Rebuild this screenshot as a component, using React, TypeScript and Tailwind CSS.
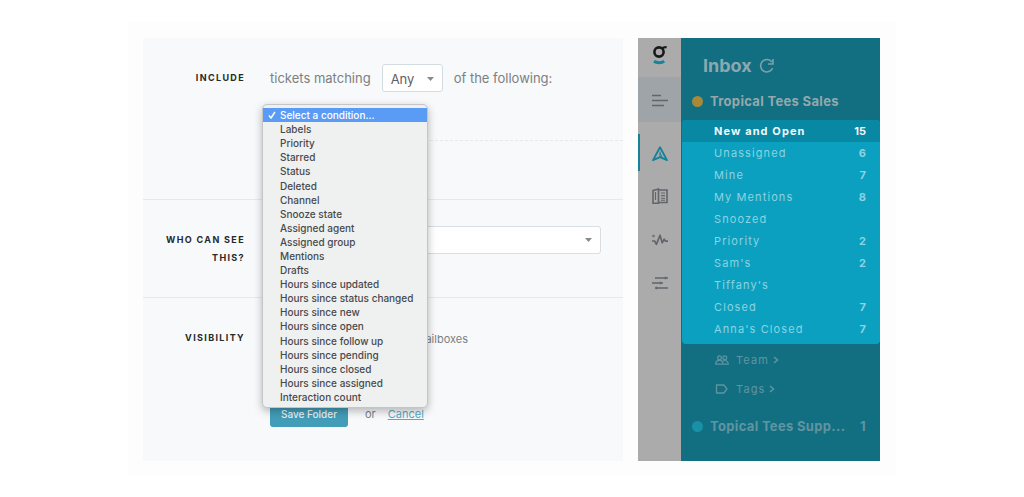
import { useState } from 'react';

const conditions = [
  'Select a condition...',
  'Labels',
  'Priority',
  'Starred',
  'Status',
  'Deleted',
  'Channel',
  'Snooze state',
  'Assigned agent',
  'Assigned group',
  'Mentions',
  'Drafts',
  'Hours since updated',
  'Hours since status changed',
  'Hours since new',
  'Hours since open',
  'Hours since follow up',
  'Hours since pending',
  'Hours since closed',
  'Hours since assigned',
  'Interaction count',
];

const folders = [
  { name: 'New and Open', count: 15 },
  { name: 'Unassigned', count: 6 },
  { name: 'Mine', count: 7 },
  { name: 'My Mentions', count: 8 },
  { name: 'Snoozed' },
  { name: 'Priority', count: 2 },
  { name: "Sam's", count: 2 },
  { name: "Tiffany's" },
  { name: 'Closed', count: 7 },
  { name: "Anna's Closed", count: 7 },
];

function Caret() {
  return (
    <svg width="7" height="5" viewBox="0 0 7 5" className="pointer-events-none absolute right-[9px] top-1/2 -translate-y-1/2 fill-[#858b8d]">
      <path d="M0 0.5h7L3.5 4.5z" />
    </svg>
  );
}

function ConditionMenu() {
  const [selected, setSelected] = useState(conditions[0]);

  return (
    <ul
      role="listbox"
      aria-label="Condition"
      className="absolute -left-2 top-[66px] z-10 flex min-h-[304px] w-[166px] flex-col rounded-[5px] border border-[#c3c6c8] bg-[#eff1f1] pb-[3px] pt-[3px] shadow-[0_3px_8px_rgba(0,0,0,0.28)]"
    >
      {conditions.map((condition) => {
        const active = condition === selected;
        return (
          <li key={condition} role="option" aria-selected={active} className="flex flex-1">
            <button
              type="button"
              onClick={() => setSelected(condition)}
              className={`flex w-full items-center text-left text-[10px] font-medium leading-[14px] ${
                active ? 'bg-[#5a9bf6] text-white' : 'text-[#48494b]'
              }`}
            >
              <span className="flex w-[17px] shrink-0 justify-center">
                {active && (
                  <svg width="8" height="8" viewBox="0 0 8 8" fill="none" stroke="currentColor" strokeWidth="1.5">
                    <path d="M1 4.6l2 2.4L7 1" />
                  </svg>
                )}
              </span>
              {condition}
            </button>
          </li>
        );
      })}
    </ul>
  );
}

function FolderForm() {
  const label = 'w-[102px] shrink-0 text-right text-[9px] font-bold uppercase leading-[18px] tracking-[0.15em] text-[#26292b]';

  return (
    <form className="min-w-0 flex-1 bg-[#f8f9fb] text-[13px] text-[#7b8082]" onSubmit={(e) => e.preventDefault()}>
      <div className="flex min-h-[162px] gap-[25px] border-b border-[#e6e9eb]">
        <label htmlFor="match" className={`${label} pt-[31px]`}>Include</label>
        <div className="relative flex-1">
          <div className="flex min-h-[103px] items-start gap-[11px] border-b border-dashed border-[#e6e9eb] pt-[26px] leading-7">
            <span>tickets matching</span>
            <span className="relative">
              <select id="match" className="h-7 w-[61px] appearance-none rounded-[3px] border border-[#d3dde1] bg-white pl-2 text-[13px] text-[#5c6163]">
                <option>Any</option>
                <option>All</option>
              </select>
              <Caret />
            </span>
            <span>of the following:</span>
          </div>
          <ConditionMenu />
        </div>
      </div>

      <div className="flex min-h-[98px] gap-[25px] border-b border-[#e6e9eb] pr-[22px]">
        <label htmlFor="audience" className={`${label} pl-4 pt-[31px]`}>Who can see this?</label>
        <div className="flex-1 pt-[26px]">
          <div className="relative">
            <select id="audience" className="block h-7 w-full appearance-none rounded-[3px] border border-[#d8dee1] bg-white px-2">
              <option></option>
            </select>
            <Caret />
          </div>
        </div>
      </div>

      <div className="flex gap-[25px] pt-[31px]">
        <span className={label}>Visibility</span>
        <div className="flex-1">
          <label className="flex w-[198px] items-center justify-between text-[11px] leading-5">
            <input type="checkbox" className="size-3" />
            all mailboxes
          </label>
          <div className="flex items-start pt-[52px] text-[11px] leading-[26px]">
            <button type="submit" className="h-[26px] w-[78px] rounded-[3px] bg-[#429db8] text-[10px] font-medium text-[#e3f1f5]">
              Save Folder
            </button>
            <span className="ml-[17px]">or</span>
            <a href="#" className="ml-3 text-[#55a9c4] underline">Cancel</a>
          </div>
        </div>
      </div>
    </form>
  );
}

function Rail() {
  return (
    <nav aria-label="Main" className="flex w-[43px] shrink-0 flex-col bg-[#ababab] text-[#62666b]">
      <a href="#" aria-label="Home" className="flex h-[39px] items-start justify-center pt-[7px]">
        <svg width="16" height="20" viewBox="0 0 16 20" fill="none">
          <circle cx="7" cy="7" r="4.6" stroke="#17191b" strokeWidth="2.6" />
          <path d="M10 3.8C11 2.2 12.3 2 14.6 2.1" stroke="#17191b" strokeWidth="2.2" />
          <path d="M2 16.2c2.6 1.9 7.4 1.9 10.2 0" stroke="#16849a" strokeWidth="3" />
        </svg>
      </a>
      <a href="#" aria-label="Menu" className="flex h-[45px] items-center justify-center bg-[#9fa4a8] pt-0.5">
        <svg width="16" height="13" viewBox="0 0 16 13" fill="none" stroke="currentColor" strokeWidth="1.5">
          <path d="M0 1.5h9M0 6.5h16M0 11.5h12" />
        </svg>
      </a>
      <a href="#" aria-label="Inbox" className="mb-1 mt-3 flex h-[37px] items-center justify-center border-l-2 border-[#168298] pr-0.5 pt-0.5 text-[#168298]">
        <svg width="16" height="16" viewBox="0 0 16 16" fill="none" stroke="currentColor" strokeWidth="1.8" strokeLinejoin="round">
          <path d="M8 1.2L15 14.2 8 11.2 1 14.2z" />
          <path d="M8 5.5v6M8 7l2.6 5" strokeWidth="1" />
        </svg>
      </a>
      <a href="#" aria-label="Knowledge base" className="flex h-[43px] items-center justify-center">
        <svg width="16" height="17" viewBox="0 0 16 17" fill="none" stroke="currentColor" strokeWidth="1.6">
          <path d="M1 2.5L6.5 1v14.2L1 15.2zM6.5 2H15v12.5H6.5" />
          <path d="M3.5 4v8M9 5h4M9 7.6h4M9 10.2h4M9 12.3h4" strokeWidth="1.1" />
        </svg>
      </a>
      <a href="#" aria-label="Reports" className="flex h-[43px] items-center justify-center">
        <svg width="16" height="12" viewBox="0 0 16 12" fill="none" stroke="currentColor" strokeWidth="1.7" strokeLinejoin="round">
          <path d="M0 7h2.6l1.8 3.4L8 1.2l2.2 7.6 2-3.6 1.2 2H16" />
          <circle cx="1.5" cy="2" r="0.4" />
        </svg>
      </a>
      <a href="#" aria-label="Settings" className="flex h-[43px] items-center justify-center">
        <svg width="16" height="14" viewBox="0 0 16 14" fill="none" stroke="currentColor" strokeWidth="1.5">
          <path d="M3 2h13M0 7h11M3 12h13" />
          <path d="M13.5 0.8v2.4M8.5 5.8v2.4M4.5 10.8v2.4" />
        </svg>
      </a>
    </nav>
  );
}

function Chevron() {
  return (
    <svg width="6" height="8" viewBox="0 0 6 8" fill="none" stroke="currentColor" strokeWidth="1.5">
      <path d="M1 1l3.5 3L1 7" />
    </svg>
  );
}

function Sidebar() {
  return (
    <aside className="flex min-w-0 flex-1 flex-col bg-[#126f81] text-[#7fa0a8]">
      <div className="flex items-center gap-[7px] pl-[22px] pt-[17px]">
        <h1 className="text-lg font-bold leading-[22px] text-[#8ba9b0]">Inbox</h1>
        <button type="button" aria-label="Refresh">
          <svg width="16" height="16" viewBox="0 0 16 16" fill="none" stroke="currentColor" strokeWidth="1.6">
            <path d="M13.6 10A6.2 6.2 0 1 1 12.8 4" />
            <path d="M14 1v5H9" />
          </svg>
        </button>
      </div>
      <a href="#" className="mt-3.5 flex items-center gap-[7px] pl-[11px] text-[13px] font-bold leading-5 tracking-wide text-[#94a8ac]">
        <span className="size-[11px] rounded-full bg-[#a98935]" />
        Tropical Tees Sales
      </a>

      <ul className="ml-px mt-[9px] overflow-hidden rounded bg-[#0ba0bf] pb-1 text-[11px] leading-[22px] tracking-widest text-[#8bd3e2]">
        {folders.map((folder, i) => (
          <li key={folder.name}>
            <a
              href="#"
              className={`flex justify-between pl-8 pr-[14px] ${i === 0 ? 'bg-[#0988a3] font-bold text-[#eef9fb]' : ''}`}
            >
              <span>{folder.name}</span>
              <span className="font-bold tracking-normal">{folder.count}</span>
            </a>
          </li>
        ))}
      </ul>

      <a href="#" className="mt-1.5 flex items-center pl-[34px] text-[11px] leading-5 tracking-widest text-[#5f95a1]">
        <svg width="14" height="10" viewBox="0 0 14 10" fill="none" stroke="currentColor" strokeWidth="1.2">
          <circle cx="4.5" cy="2.8" r="1.9" />
          <circle cx="9.8" cy="2.8" r="1.9" />
          <path d="M0.7 9.2c0-3 2-3.8 3.8-3.8S8 6.2 8 9.2zM8 6c2.5-1.2 5.3 0 5.3 3.2H8" />
        </svg>
        <span className="ml-[7px] mr-1">Team</span>
        <Chevron />
      </a>
      <a href="#" className="mt-[9px] flex items-center pl-[34px] text-[11px] leading-5 tracking-widest text-[#5f95a1]">
        <svg width="14" height="10" viewBox="0 0 14 10" fill="none" stroke="currentColor" strokeWidth="1.3" strokeLinejoin="round">
          <path d="M1.5 1h7.3L12 5 8.8 9H1.5z" />
        </svg>
        <span className="ml-[7px] mr-1">Tags</span>
        <Chevron />
      </a>
      <a href="#" className="mt-[17px] flex items-center gap-[7px] pl-[11px] pr-[14px] text-[13px] font-bold leading-5 tracking-wide text-[#5f95a1]">
        <span className="size-[11px] shrink-0 rounded-full bg-[#1990a5]" />
        <span className="flex-1 whitespace-nowrap">Topical Tees Supp...</span>
        <span>1</span>
      </a>
    </aside>
  );
}

export default function App() {
  return (
    <div className="min-h-screen bg-white pb-5 pt-[22px] font-['Inter','Liberation_Sans',sans-serif]">
      <main className="mx-auto flex max-w-3xl gap-[15px] bg-[#fdfdfd] pb-[15px] pl-[15px] pr-4 pt-4">
        <FolderForm />
        <div className="flex min-h-[423px] w-[242px] shrink-0">
          <Rail />
          <Sidebar />
        </div>
      </main>
    </div>
  );
}
